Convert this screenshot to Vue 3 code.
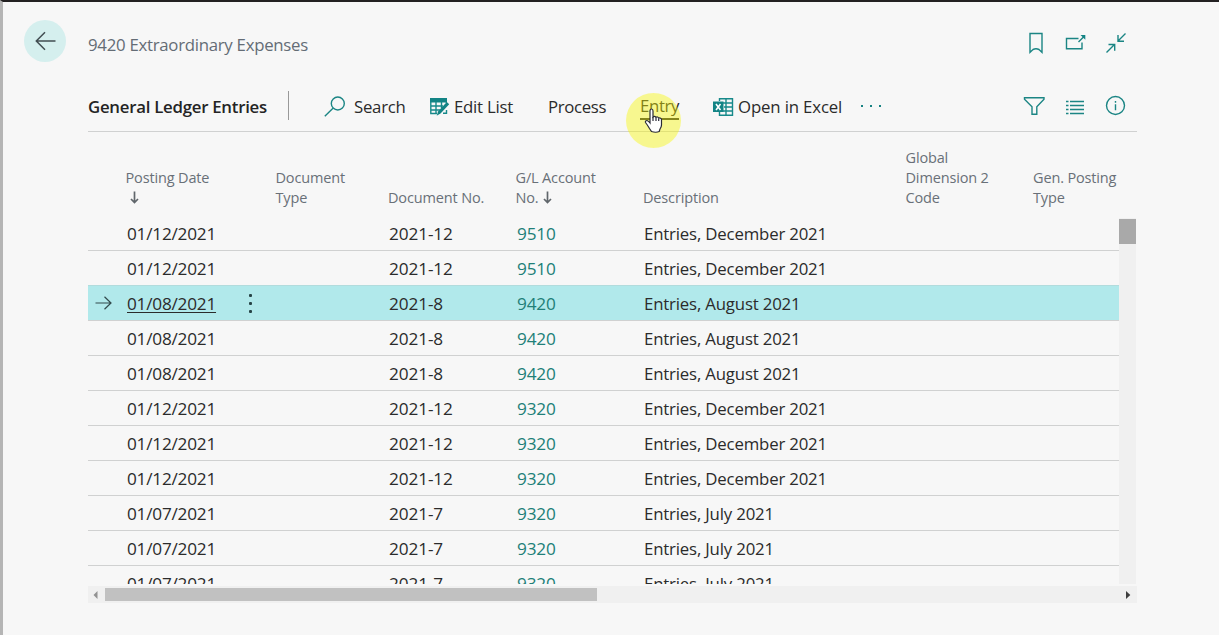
<script setup>
const columns = [
  { lines: ['Posting Date'], sorted: 'below' },
  { lines: ['Document', 'Type'] },
  { lines: ['Document No.'] },
  { lines: ['G/L Account', 'No.'], sorted: 'inline' },
  { lines: ['Description'] },
  { lines: ['Global', 'Dimension 2', 'Code'] },
  { lines: ['Gen. Posting', 'Type'] },
]

const entries = [
  ['01/12/2021', '2021-12', '9510', 'December'],
  ['01/12/2021', '2021-12', '9510', 'December'],
  ['01/08/2021', '2021-8', '9420', 'August'],
  ['01/08/2021', '2021-8', '9420', 'August'],
  ['01/08/2021', '2021-8', '9420', 'August'],
  ['01/12/2021', '2021-12', '9320', 'December'],
  ['01/12/2021', '2021-12', '9320', 'December'],
  ['01/12/2021', '2021-12', '9320', 'December'],
  ['01/07/2021', '2021-7', '9320', 'July'],
  ['01/07/2021', '2021-7', '9320', 'July'],
  ['01/07/2021', '2021-7', '9320', 'July'],
].map(([date, doc, account, month]) => ({ date, doc, account, text: `Entries, ${month} 2021` }))

const selected = 2
</script>

<template>
  <div class="page">
    <header class="top">
      <button class="back" aria-label="Back">
        <svg width="22" height="20" viewBox="0 0 22 20"><path d="M20.500 10H1.500M10 1.300L1.300 10L10 18.700" /></svg>
      </button>
      <h1 class="title">9420 Extraordinary Expenses</h1>
      <div class="window-icons">
        <svg width="24" height="24" viewBox="0 0 24 24"><path d="M6 2.500h12v18.800l-3-2.800q-3-1.500-6 0l-3 2.800z" /></svg>
        <svg width="24" height="24" viewBox="0 0 24 24"><path d="M14.500 7.500H2.500v10.300h15.500v-6.300M14.500 11l5.500-5.500" /><path class="solid" d="M16.500 4h4.800v4.800z" /></svg>
        <svg width="24" height="24" viewBox="0 0 24 24"><path d="M21.500 2.500l-7.500 7.500M14 4v6.300h6M2.500 21.500L10.500 13.500M4.500 13.500h6.200v6.200" /></svg>
      </div>
    </header>

    <nav class="toolbar">
      <strong class="list-name">General Ledger Entries</strong>
      <i class="divider"></i>
      <span class="action search">
        <svg width="22" height="22" viewBox="0 0 22 22"><circle cx="13.800" cy="7.500" r="6.500" /><path d="M9 12.200L.8 20.300" /></svg>Search
      </span>
      <span class="action edit">
        <svg width="20" height="20" viewBox="0 0 20 20">
          <path class="solid" d="M0 1h17v4.500H0z" />
          <path class="grid-lines" d="M.8 5v11.500H7M6 5v11.500M11.500 5v6M16.300 5v1M1 9h12M1 13h9" />
          <path class="solid" d="M16.800 5l2.400 2.200L10.500 16.500L6.700 18.700l1.300-4.200z" />
          <path class="grid-lines" d="M13 16.200h3.500V13" />
        </svg>Edit List
      </span>
      <span class="action process">Process</span>
      <span class="action entry">Entry</span>
      <span class="action excel">
        <svg width="21" height="20" viewBox="0 0 21 20">
          <path class="grid-lines" d="M6.500 4V1.700h13v16.600h-13V15M13 2v16M10 6h9.500M11 10h8.500M10 14h9.500" />
          <path class="solid" d="M0 4.500h10.500v10.500H0z" />
          <path class="cross" d="M3 7l4.500 6M7.500 7L3 13" />
        </svg>Open in Excel
      </span>
      <span class="more"><i></i><i></i><i></i></span>
      <div class="view-icons">
        <svg width="24" height="24" viewBox="0 0 24 24"><path d="M1.500 2.700h19.500v1.600L13.800 11.700v7.600H9v-7.600L1.500 4.300z" /></svg>
        <svg width="24" height="24" viewBox="0 0 24 24"><path d="M3 6.500h2.500M7 6.500h14M3 10.500h2.500M7 10.500h14M3 14.500h2.500M7 14.500h14M3 18.500h2.500M7 18.500h14" /></svg>
        <svg width="24" height="24" viewBox="0 0 24 24"><circle cx="12.500" cy="10.500" r="9" /><path d="M12.500 9.200v6M12.500 6v1.700" /></svg>
      </div>
    </nav>

    <section class="table">
      <div class="grid head">
        <span></span>
        <div v-for="(col, i) in columns" :key="i" class="heading">
          <div v-for="(line, n) in col.lines" :key="n" class="line">
            {{ line }}<svg v-if="col.sorted === 'inline' && n === 1" class="sort" width="9" height="14" viewBox="0 0 9 14"><path d="M4.500 .5v11M1 8l3.500 3.500L8 8" /></svg>
          </div>
          <div v-if="col.sorted === 'below'" class="line">
            <svg class="sort" width="9" height="14" viewBox="0 0 9 14"><path d="M4.500 .5v11M1 8l3.500 3.500L8 8" /></svg>
          </div>
        </div>
      </div>
      <div class="viewport">
        <div class="rows">
          <div v-for="(entry, i) in entries" :key="i" class="grid row" :class="{ selected: i === selected }">
            <span class="marker">
              <svg v-if="i === selected" width="17" height="16" viewBox="0 0 17 16"><path d="M.5 8h15.500M9.500 1.800L16 8L9.500 14.200" /></svg>
            </span>
            <span class="date">
              <span class="value">{{ entry.date }}</span>
              <span v-if="i === selected" class="dots"><i></i><i></i><i></i></span>
            </span>
            <span></span>
            <span class="doc">{{ entry.doc }}</span>
            <a class="account">{{ entry.account }}</a>
            <span class="text">{{ entry.text }}</span>
          </div>
        </div>
        <div class="vscroll"><div class="vthumb"></div></div>
      </div>
      <div class="hscroll">
        <svg width="17" height="16" viewBox="0 0 17 16"><path class="left-tip" d="M9.500 4v8L5.500 8z" /></svg>
        <div class="hthumb"></div>
        <svg class="end" width="17" height="16" viewBox="0 0 17 16"><path class="right-tip" d="M6 4v8L10.300 8z" /></svg>
      </div>
    </section>

    <div class="halo"></div>
    <svg class="pointer" width="20" height="26" viewBox="0 0 20 26">
      <path d="M6 15V3q0-2 1.500-2T9 3v6q1.500-1.500 3 .3q1.700-1 2.700.8q2.500-.6 2.800 1.500V17q0 2-1.500 4l-.8 2.500Q12 25 7.500 23.500L5.500 20.500Q3.500 17 1.500 14.500Q1 12.500 3 12.500Q4.500 13 6 15z" />
      <path d="M9 9v4M12 9.500V13M14.700 10.500V13" />
    </svg>
  </div>
</template>

<style>
body { background: #f7f7f7; overflow: hidden; }
</style>

<style scoped>
* { box-sizing: border-box; }
.page {
  position: relative;
  width: 1219px;
  height: 635px;
  overflow: hidden;
  background: #f7f7f7;
  border-top: 2px solid #232122;
  border-left: 3px solid #b5b5b5;
  padding-left: 21px;
  font-family: "Open Sans", "Noto Sans", sans-serif;
  font-size: 16.8px;
  letter-spacing: -0.25px;
  color: #2b2b2b;
  white-space: nowrap;
}
svg { display: block; flex: none; fill: none; stroke: #1b8584; stroke-width: 1.4; }
.solid { fill: #138485; stroke: none; }
.top { display: flex; height: 80px; padding-top: 18px; }
.back {
  display: flex; align-items: center; justify-content: center;
  width: 42px; height: 42px; padding: 0 0 0 2px; border: 0; border-radius: 50%;
  background: #d5efee;
}
.back svg { stroke: #424d51; stroke-width: 1.5; }
.title {
  width: 250px; margin: 13px 0 0 22px; font-size: 16.8px; font-weight: 400;
  line-height: 24px; color: #646c75; letter-spacing: -0.27px;
}
.window-icons, .view-icons { display: flex; gap: 16px; }
.window-icons { margin: 11px 0 0 686px; }
.toolbar {
  display: flex; align-items: center; width: 1049px; height: 50px;
  margin-left: 64px; border-bottom: 1px solid #d0d1d1;
}
.list-name { width: 200px; font-weight: 600; letter-spacing: -0.25px; color: #242424; }
.divider { width: 1px; height: 29px; margin-top: -3px; background: #999; }
.action { display: flex; align-items: center; height: 30px; }
.search { width: 141px; padding-left: 35px; gap: 8px; }
.edit { width: 118px; gap: 4px; }
.process { width: 92px; letter-spacing: -0.35px; }
.entry { width: 39px; border-bottom: 2px solid #333; height: 26px; letter-spacing: -0.35px; }
.excel { width: 148px; margin-left: 34px; gap: 4px; letter-spacing: -0.15px; }
.grid-lines { stroke: #17898a; stroke-width: 1.4; }
.cross { stroke: #fff; stroke-width: 1.6; }
.more { display: flex; gap: 7px; margin-top: -2px; }
.more i { width: 2px; height: 2px; background: #178282; }
.view-icons { margin-left: auto; margin-right: 10px; }
.table { margin-left: 64px; width: 1049px; }
.grid { display: grid; grid-template-columns: 38px 150px 112px 127px 128px 262px 128px 1fr; }
.head { height: 84px; padding-bottom: 8px; align-items: end; }
.heading { font-size: 14.5px; line-height: 20px; color: #697078; letter-spacing: -0.15px; }
.heading:nth-child(2), .heading:nth-child(3) { margin-left: -0.5px; }
.heading:nth-child(5), .heading:nth-child(7) { margin-left: 0.5px; }
.line { display: flex; align-items: center; height: 20px; }
.sort { margin-left: 4px; stroke: #60666b; stroke-width: 1.7; }
.viewport { display: flex; height: 368px; overflow: hidden; }
.rows { width: 1031px; }
.row { height: 35px; border-bottom: 1px solid #d0d1d1; align-items: center; letter-spacing: -0.2px; }
.row > span:not(.marker), .row > a { padding-left: 1px; }
.row > a.account { padding-left: 2px; }
.row:has(+ .selected) { border-bottom-color: #b2dcdd; }
.selected { background: #b1e9eb; }
.marker svg { margin-left: 7px; stroke: #324a4c; stroke-width: 1.2; }
.date { display: flex; align-items: center; font-size: 17.2px; }
.date .value { width: 89px; letter-spacing: -0.22px; }
.selected .value { text-decoration: underline; text-decoration-thickness: 1px; text-underline-offset: 2px; }
.doc, .account { font-size: 17.2px; letter-spacing: -0.2px; }
.doc { letter-spacing: -0.1px; }
.text { letter-spacing: -0.17px; }
.account { color: #217f78; }
.dots { display: flex; flex-direction: column; gap: 5px; margin-left: 33px; padding-top: 1px; }
.dots i { width: 3px; height: 3px; border-radius: 1px; background: #274447; }
.vscroll { width: 17px; height: 366px; margin-top: 2px; background: #f0f0f0; padding-top: 1px; }
.vthumb { height: 25px; background: #a9a9a9; }
.hscroll { display: flex; align-items: center; width: 1049px; height: 17px; margin-top: 2px; background: #f0f0f0; }
.hthumb { width: 492px; height: 13px; background: #c1c1c1; }
.end { margin-left: auto; }
.left-tip { fill: #929292; stroke: none; }
.right-tip { fill: #3e3e3e; stroke: none; }
.halo {
  position: absolute; left: 622.5px; top: 91px; width: 55px; height: 55px;
  border-radius: 50%; background: rgba(249, 247, 0, 0.42);
}
.pointer { position: absolute; left: 641px; top: 106px; stroke: #2a2b36; fill: #fff; stroke-width: 1.2; }
</style>
